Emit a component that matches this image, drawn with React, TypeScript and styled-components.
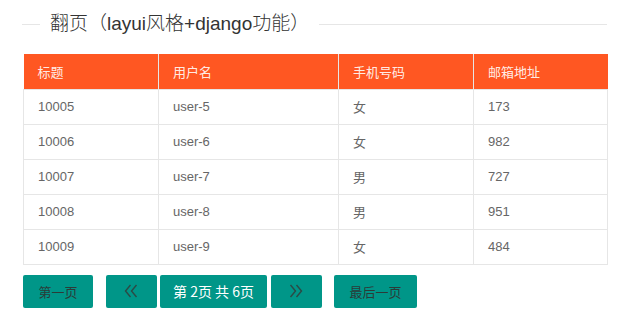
import { createGlobalStyle } from "styled-components";
import styled from "styled-components";

const GlobalStyle = createGlobalStyle`
  html, body {
    margin: 0;
    padding: 0;
    background: #fff;
  }
  body {
    font-family: "Liberation Sans", "Noto Sans CJK SC", sans-serif;
    color: #666;
  }
  *, *::before, *::after {
    box-sizing: border-box;
  }
`;

const Page = styled.div`
  padding: 11px 27px 0 22px;
  width: 634px;
`;

const Field = styled.fieldset`
  margin: 0;
  padding: 0;
  border: none;
  border-top: 1px solid #e6e6e6;
`;

const Legend = styled.legend`
  margin-left: 18px;
  padding: 0 10px;
  font-size: 19px;
  line-height: 26px;
  font-weight: 300;
  color: #333;
  font-family: "Liberation Sans", "Noto Sans CJK SC", sans-serif;
`;

const Table = styled.table`
  margin: 17px 0 0 1px;
  width: 584px;
  border-collapse: collapse;
  table-layout: fixed;
  font-size: 13px;
`;

const HeadCell = styled.th<{ $w: number }>`
  width: ${({ $w }) => $w}px;
  height: 35px;
  padding: 0 14px;
  text-align: left;
  font-weight: 400;
  color: rgba(255, 255, 255, 0.9);
  background: #ff5722;
  border: 1px solid #e6e6e6;
  border-top: none;
  font-family: "Noto Sans CJK SC", "Liberation Sans", sans-serif;
  &:first-child {
    border-left: none;
  }
  &:last-child {
    border-right: none;
  }
`;

const Cell = styled.td`
  height: 35px;
  padding: 0 14px;
  color: #666;
  border: 1px solid #e6e6e6;
`;

const Pager = styled.div`
  display: flex;
  gap: 12.5px;
  margin: 10px 0 0 1px;
`;

const Group = styled.div`
  display: flex;
  gap: 3.5px;
`;

const PageButton = styled.button<{ $w: number; $light?: boolean }>`
  all: unset;
  display: flex;
  align-items: center;
  justify-content: center;
  width: ${({ $w }) => $w}px;
  height: 33px;
  background: #009688;
  border-radius: 2px;
  font-size: ${({ $light }) => ($light ? 14 : 13)}px;
  color: ${({ $light }) => ($light ? "#fff" : "#2b3b38")};
  font-family: "Noto Sans CJK SC", "Liberation Sans", sans-serif;
  cursor: pointer;
`;

const columns = [
  { title: "标题", w: 135 },
  { title: "用户名", w: 180 },
  { title: "手机号码", w: 135 },
  { title: "邮箱地址", w: 134 },
];

const rows = [
  ["10005", "user-5", "女", "173"],
  ["10006", "user-6", "女", "982"],
  ["10007", "user-7", "男", "727"],
  ["10008", "user-8", "男", "951"],
  ["10009", "user-9", "女", "484"],
];

function Chevrons({ dir }: { dir: "left" | "right" }) {
  const flip = dir === "right" ? "scale(-1,1) translate(-14,0)" : undefined;
  return (
    <svg width="14" height="14" viewBox="0 0 14 14">
      <g
        transform={flip}
        fill="none"
        stroke="#2b4a45"
        strokeWidth="1.4"
        strokeLinejoin="miter"
      >
        <polyline points="6.5,1 1.5,7 6.5,13" />
        <polyline points="12.5,1 7.5,7 12.5,13" />
      </g>
    </svg>
  );
}

export default function App() {
  return (
    <Page>
      <GlobalStyle />
      <Field>
        <Legend>翻页（layui风格+django功能）</Legend>
      </Field>

      <Table>
        <thead>
          <tr>
            {columns.map((c) => (
              <HeadCell key={c.title} $w={c.w}>
                {c.title}
              </HeadCell>
            ))}
          </tr>
        </thead>
        <tbody>
          {rows.map((r) => (
            <tr key={r[0]}>
              {r.map((v, i) => (
                <Cell key={i}>{v}</Cell>
              ))}
            </tr>
          ))}
        </tbody>
      </Table>

      <Pager>
        <PageButton $w={70}>第一页</PageButton>
        <Group>
          <PageButton $w={51}>
            <Chevrons dir="left" />
          </PageButton>
          <PageButton $w={107} $light>
            第 2页 共 6页
          </PageButton>
          <PageButton $w={51}>
            <Chevrons dir="right" />
          </PageButton>
        </Group>
        <PageButton $w={83}>最后一页</PageButton>
      </Pager>
    </Page>
  );
}
